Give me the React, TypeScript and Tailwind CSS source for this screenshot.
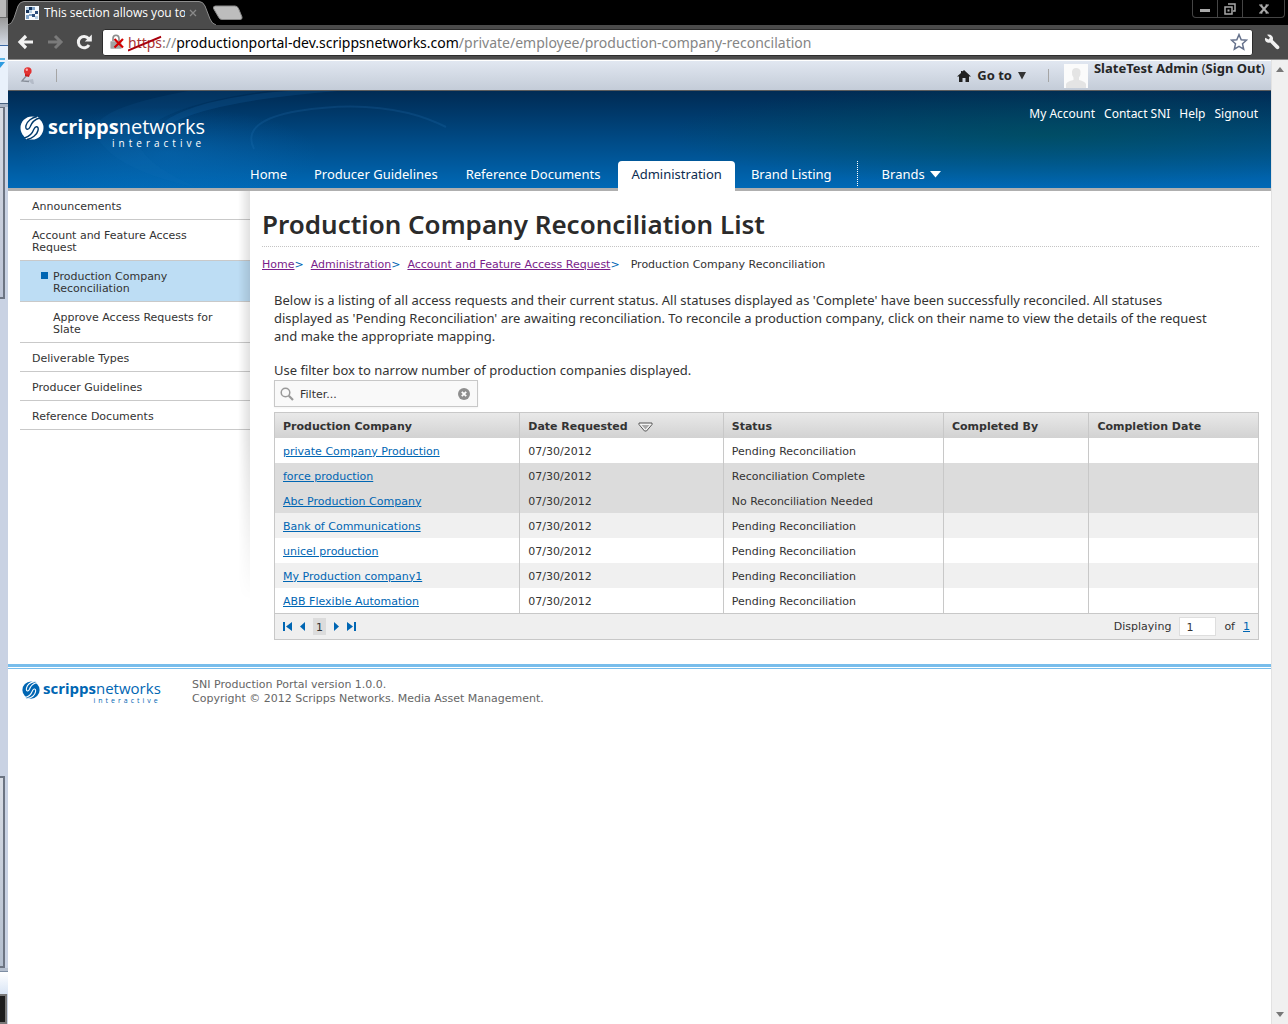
import React from "react";

const ui = "font-['Open_Sans','Noto_Sans',sans-serif]";
const lucida = "font-['Noto_Sans','Open_Sans',sans-serif]";
const verdana = "font-['DejaVu_Sans',sans-serif]";
const copy = "font-['Noto_Sans','DejaVu_Sans',sans-serif] text-[13px] leading-[18px]";

type Row = { name: string; date: string; status: string; bg: string };

const rows: Row[] = [
  { name: "private Company Production", date: "07/30/2012", status: "Pending Reconciliation", bg: "bg-white" },
  { name: "force production", date: "07/30/2012", status: "Reconciliation Complete", bg: "bg-[#dcdcdc]" },
  { name: "Abc Production Company", date: "07/30/2012", status: "No Reconciliation Needed", bg: "bg-[#dcdcdc]" },
  { name: "Bank of Communications", date: "07/30/2012", status: "Pending Reconciliation", bg: "bg-[#f0f0f0]" },
  { name: "unicel production", date: "07/30/2012", status: "Pending Reconciliation", bg: "bg-white" },
  { name: "My Production company1", date: "07/30/2012", status: "Pending Reconciliation", bg: "bg-[#f0f0f0]" },
  { name: "ABB Flexible Automation", date: "07/30/2012", status: "Pending Reconciliation", bg: "bg-white" },
];

function LogoMark({ className, fg, bg }: { className: string; fg: string; bg: string }) {
  return (
    <svg viewBox="0 0 24 24" className={className} aria-hidden="true">
      <circle cx="12" cy="12" r="11.5" fill={fg} />
      <path
        d="M17 0.500C12 1.500 7 5 6 9.500C5 14 8.500 14.500 10 11C11.500 7 14 3.500 19.500 2"
        fill={fg}
        stroke={bg}
        strokeWidth="1.400"
      />
      <path
        d="M7 23.500C12 22.500 17 19 18 14.500C19 10 15.500 9.500 14 13C12.500 17 10 20.500 4.500 22"
        fill={fg}
        stroke={bg}
        strokeWidth="1.400"
      />
    </svg>
  );
}

function DesktopStrip() {
  return (
    <div className="flex w-2 shrink-0 flex-col overflow-hidden bg-[#c9d2e3]" aria-hidden="true">
      <div className="h-[18px] border-r-2 border-b border-[#6a6a6a] bg-[#b9b9b9]" />
      <div className="h-[27px] bg-gradient-to-b from-[#9a9a9a] to-[#d5dce6]" />
      <div className="h-[58px] border-t border-[#3b69a5] bg-[#e9f1fb] pt-3">
        <div className="h-[2px] w-[5px] bg-[#59b4e6]" />
        <svg viewBox="0 0 5 7" className="mt-[2px] h-[7px] w-[5px]">
          <path d="M0 0H5L0 6Z" fill="#2d9be0" />
        </svg>
      </div>
      <div className="h-1 border-t border-[#47607f] bg-[#a9b4c6]" />
      <div className="mr-[3px] h-[192px] border-t border-r-2 border-b-2 border-[#6c7482] bg-gradient-to-b from-[#d9dde5] to-[#bcc4d6]" />
      <div className="h-[477px]" />
      <div className="mr-[3px] h-[192px] border-t-2 border-r-2 border-b-2 border-[#6c7482] bg-gradient-to-b from-[#d9dde5] to-[#b4bfcf]" />
      <div className="h-1 border-b border-[#7d8da3] bg-[#b5bfce]" />
      <div className="h-[22px] bg-gradient-to-b from-white to-[#d9e5f5]" />
      <div className="mr-px flex-1 border-t-2 border-r-2 border-b-2 border-[#777] bg-[#1d1d1d]" />
    </div>
  );
}

function TabBar() {
  return (
    <div className="flex h-[25px] bg-black">
      <div className="relative flex h-[25px] w-[208px] items-center pl-[17px]">
        <svg viewBox="0 0 208 25" preserveAspectRatio="none" className="absolute inset-0 h-full w-full" aria-hidden="true">
          <path d="M0 25Q4 24 6 18L10 6Q12 1.500 16 1.500H191Q195 1.500 197 6L202 19Q204 24 208 25Z" fill="#4b4b4b" />
          <path d="M0 25Q4 24 6 18L10 6Q12 1.500 16 1.500H191Q195 1.500 197 6L202 19Q204 24 208 25" fill="none" stroke="#8e8e8e" />
        </svg>
        <svg viewBox="0 0 14 14" className="relative h-[14px] w-[14px]" aria-hidden="true">
          <path d="M0 0H14V14H0Z" fill="#f4f8fc" />
          <path d="M4 1H7V4H4ZM1 4H4V7H1Z" fill="#15345c" />
          <path d="M7 8H10V11H7ZM10 5H13V8H10Z" fill="#2a4d7c" />
          <path d="M1 1H4V4H1ZM4 4H7V7H4ZM10 10H13V13H10Z" fill="#b4cde2" />
          <path d="M7 1H10V4H7ZM1 9H4V13H1ZM4 8H7V10H4Z" fill="#7fa3c8" />
        </svg>
        <span className={`relative ml-[5px] w-[141px] overflow-hidden text-[12px] leading-4 whitespace-nowrap text-white ${ui}`}>
          This section allows you to
        </span>
        <button type="button" aria-label="Close tab" className="relative ml-1">
          <svg viewBox="0 0 8 8" className="h-2 w-2">
            <path d="M1 1L7 7M7 1L1 7" stroke="#8a8a8a" strokeWidth="1.300" />
          </svg>
        </button>
      </div>
      <button type="button" aria-label="New tab" className="ml-[-4px] flex items-center">
        <svg viewBox="0 0 32 16" className="h-4 w-8">
          <path d="M3.500 1H23Q25.500 1 26.500 3.500L30 12Q30.500 14.500 28 14.500H10Q7.500 14.500 6.500 12L1.500 3.500Q1 1 3.500 1Z" fill="#bdbdbd" stroke="#8a8a8a" />
        </svg>
      </button>
      <div className="mr-[3px] ml-auto flex h-[18px] rounded-b border-x border-b border-[#454545]">
        <button type="button" aria-label="Minimize" className="flex w-[25px] items-center justify-center border-r border-[#454545]">
          <span className="mt-1 h-[3px] w-[10px] bg-[#a9a9a9]" />
        </button>
        <button type="button" aria-label="Restore" className="flex w-[25px] items-center justify-center border-r border-[#454545]">
          <svg viewBox="0 0 12 12" className="h-3 w-3">
            <path d="M4 1H11V8H9M1 4H8V11H1Z" fill="none" stroke="#a9a9a9" strokeWidth="1.500" />
            <path d="M3.500 6.500H5.500V8.500H3.500Z" fill="#a9a9a9" />
          </svg>
        </button>
        <button type="button" aria-label="Close" className="flex w-[41px] items-center justify-center">
          <svg viewBox="0 0 10 10" className="h-[10px] w-[10px]">
            <path d="M1.500 1L8.500 9M8.500 1L1.500 9" stroke="#a9a9a9" strokeWidth="2" />
            <path d="M0 1H3.500M6.500 1H10M0 9H3.500M6.500 9H10" stroke="#a9a9a9" />
          </svg>
        </button>
      </div>
    </div>
  );
}

function AddressBar() {
  return (
    <div className="flex h-[35px] items-center border-b border-[#8e8e8e] bg-[#4b4b4b] pl-[9px]">
      <button type="button" aria-label="Back">
        <svg viewBox="0 0 18 16" className="h-4 w-[18px]">
          <path d="M9 2L3 8L9 14M3 8H16" fill="none" stroke="#f2f2f2" strokeWidth="3.200" />
        </svg>
      </button>
      <button type="button" aria-label="Forward" className="ml-[11px]">
        <svg viewBox="0 0 18 16" className="h-4 w-[18px]">
          <path d="M9 2L15 8L9 14M15 8H2" fill="none" stroke="#7a7a7a" strokeWidth="3" />
        </svg>
      </button>
      <button type="button" aria-label="Reload" className="ml-3">
        <svg viewBox="0 0 16 16" className="h-4 w-4">
          <path d="M13 11A5.700 5.700 0 1 1 12.500 4.500" fill="none" stroke="#f2f2f2" strokeWidth="3" />
          <path d="M15.800 0.500V7.500H8.800Z" fill="#f2f2f2" />
        </svg>
      </button>
      <div className="ml-[10px] flex h-[27px] min-w-0 flex-1 items-center rounded-[3px] border border-[#2c2c2c] bg-white pl-[7px]">
        <svg viewBox="0 0 14 16" className="h-4 w-[14px] shrink-0" aria-hidden="true">
          <path d="M3 8V4.500Q3 1.200 6 1.200Q9 1.200 9 4.500V8" fill="none" stroke="#8d8d8d" strokeWidth="1.600" />
          <path d="M0.500 7H11.500V15H0.500Z" fill="#b9b9b9" />
          <path d="M0.500 9H11M0.500 11H11M0.500 13H11" stroke="#8d8d8d" />
          <path d="M4.500 5L13 13.500M13 5L4.500 13.500" stroke="#d40000" strokeWidth="2.200" />
        </svg>
        <div role="textbox" aria-label="Address" className={`ml-1 flex pt-px text-[14px] leading-5 whitespace-nowrap text-[#858585] ${lucida}`}>
          <span className="relative text-[#a33]">
            https
            <svg viewBox="0 0 34 16" preserveAspectRatio="none" className="absolute inset-0 h-full w-full" aria-hidden="true">
              <path d="M0 14L33 3" stroke="#a8000c" strokeWidth="1.600" />
            </svg>
          </span>
          <span>://</span>
          <span className="text-black">productionportal-dev.scrippsnetworks.com</span>
          <span>/private/employee/production-company-reconcilation</span>
        </div>
        <button type="button" aria-label="Bookmark this page" className="mr-[4px] ml-auto">
          <svg viewBox="0 0 18 18" className="h-[18px] w-[18px]">
            <path d="M9 1.600L11.200 6.700L16.500 7.200L12.500 10.800L13.700 16.200L9 13.400L4.300 16.200L5.500 10.800L1.500 7.200L6.800 6.700Z" fill="#fff" stroke="#66728c" strokeWidth="1.500" />
          </svg>
        </button>
      </div>
      <button type="button" aria-label="Settings" className="mr-2 ml-[11px]">
        <svg viewBox="0 0 16 16" className="h-4 w-4">
          <path d="M3 0.800L6 3.800L4.600 5.600L1.300 3.800Q0.300 6 2 7.800Q3.800 9.400 6.200 8.600L12 14.600Q13.500 16 15 14.600Q16 13 14.600 11.700L8.800 6Q9.600 3.600 7.800 1.800Q5.800 0.100 3 0.800Z" fill="#f0f0f0" />
        </svg>
      </button>
    </div>
  );
}

function Dock() {
  return (
    <div className={`flex h-[31px] items-center border-t border-b border-t-white border-b-[#5d5d5d] bg-gradient-to-b from-[#e1e7f1] to-[#c4ccd8] pl-3 text-[13px] font-bold text-[#262626] ${lucida}`}>
      <button type="button" aria-label="Pin the dock">
        <svg viewBox="0 0 16 20" className="h-5 w-4">
          <path d="M8 14L13 13L14 18L12 18Z" fill="#a9b1be" opacity="0.700" />
          <path d="M7 9L2 15L9 15.500" fill="none" stroke="#868d98" strokeWidth="1.300" />
          <path d="M5 7L10 8L9 11L5 10Z" fill="#c91c1c" />
          <circle cx="7.800" cy="5" r="3.800" fill="#e23232" />
          <circle cx="6.800" cy="3.800" r="1.200" fill="#ffaaaa" />
        </svg>
      </button>
      <span className="ml-5 h-[13px] w-px bg-[#a5a5a5]" />
      <button type="button" className="ml-auto flex items-center">
        <svg viewBox="0 0 14 12" className="h-3 w-[14px]" aria-hidden="true">
          <path d="M7 0L14 6.500H12V12H8.500V8H5.500V12H2V6.500H0L4 3V1H5.500V1.500Z" fill="#222" />
        </svg>
        <span className="ml-[6px]">Go to</span>
        <svg viewBox="0 0 8 8" className="ml-[6px] h-2 w-2" aria-hidden="true">
          <path d="M0 0H8L4 7.500Z" fill="#333" />
        </svg>
      </button>
      <span className="ml-[22px] h-[13px] w-px bg-[#a5a5a5]" />
      <svg viewBox="0 0 24 24" className="ml-[15px] h-6 w-6" role="img" aria-label="User portrait">
        <path d="M0 0H24V24H0Z" fill="#fbfbfb" />
        <path d="M2 24V20Q3 17.500 9.500 16V13.500Q7.500 11 8 7.500Q8.500 4 12 4Q16 4 16.500 7.500Q17 11 15 13.500V16Q21 17.500 22 20V24Z" fill="#e4e4e4" />
      </svg>
      <div className="mr-[6px] ml-[6px] self-start leading-[14px]">
        <a href="#profile">SlateTest Admin</a> <span className="font-normal">(</span>
        <a href="#signout">Sign Out</a>
        <span className="font-normal">)</span>
      </div>
    </div>
  );
}

function Header() {
  return (
    <header className="relative flex h-[100px] flex-col justify-between border-b-[3px] border-[#afafaf] bg-gradient-to-b from-[#002b54] via-[#004a85] to-[#0069b6]">
      <svg viewBox="0 0 1263 97" preserveAspectRatio="none" className="absolute inset-0 h-[97px] w-full" aria-hidden="true">
        <defs>
          <radialGradient id="green">
            <stop offset="0" stopColor="#005540" stopOpacity="0.420" />
            <stop offset="1" stopColor="#005540" stopOpacity="0" />
          </radialGradient>
          <radialGradient id="glow">
            <stop offset="0" stopColor="#0f7acb" stopOpacity="0.300" />
            <stop offset="1" stopColor="#0f7acb" stopOpacity="0" />
          </radialGradient>
        </defs>
        <ellipse cx="1040" cy="44" rx="380" ry="52" fill="url(#green)" />
        <ellipse cx="160" cy="62" rx="150" ry="46" fill="url(#glow)" />
        <path d="M330 0Q180 12 150 42Q150 26 200 12Q240 2 280 0Z" fill="#1a73bd" opacity="0.180" />
        <path d="M180 0Q70 20 90 48Q110 80 190 97Q130 70 130 48Q150 14 260 0Z" fill="#1a73bd" opacity="0.100" />
        <path d="M246 58Q232 30 290 20Q350 10 400 22Q420 27 438 36" fill="none" stroke="#2b80c4" strokeWidth="2" opacity="0.180" />
      </svg>
      <div className="relative flex justify-between pr-[13px] pl-3">
        <a href="#home" aria-label="Scripps Networks Interactive" className={`mt-6 flex text-white ${ui}`}>
          <LogoMark className="mt-px h-6 w-6" fg="#ffffff" bg="#003a6c" />
          <span className="ml-1 flex flex-col">
            <span className="text-[20px] leading-[24px]">
              <b>scripps</b>networks
            </span>
            <span className="self-end text-[10px] leading-[8px] tracking-[4px]">interactive</span>
          </span>
        </a>
        <nav aria-label="Account" className={`mt-[15px] flex gap-[9px] text-[12px] leading-4 text-white ${lucida}`}>
          <a href="#account">My Account</a>
          <a href="#contact">Contact SNI</a>
          <a href="#help">Help</a>
          <a href="#signout">Signout</a>
        </nav>
      </div>
      <nav aria-label="Main" className={`relative mb-[-3px] ml-[230px] flex text-[13px] leading-[27px] text-white ${lucida}`}>
        <a href="#home" className="px-3">Home</a>
        <a href="#guidelines" className="ml-[3px] px-3">Producer Guidelines</a>
        <a href="#documents" className="ml-1 px-3">Reference Documents</a>
        <a href="#administration" aria-current="page" className="ml-[6px] rounded-t bg-white px-[13px] pb-[3px] text-[#0b2c50]">
          Administration
        </a>
        <a href="#brandlisting" className="ml-1 px-3">Brand Listing</a>
        <span className="ml-[13px] h-[25px] border-l border-dotted border-white" />
        <button type="button" className="ml-6 flex h-[27px] items-center">
          Brands
          <svg viewBox="0 0 11 7" className="ml-[5px] h-[7px] w-[11px]" aria-hidden="true">
            <path d="M0 0H11L5.500 6.500Z" fill="#fff" />
          </svg>
        </button>
      </nav>
    </header>
  );
}

function SideItem({ children, kind = "top" }: { children: React.ReactNode; kind?: "top" | "sub" | "current" }) {
  const border = "border-b border-[#c9c9c9] pt-[10px] pb-[6px]";
  if (kind === "top")
    return (
      <li className={border}>
        <a href="#section" className="block pr-10 pl-3">{children}</a>
      </li>
    );
  return (
    <li className={kind === "current" ? `${border} bg-[#bdddf4]` : border}>
      <a href="#section" className="flex gap-[5px] pr-5 pl-[21px]">
        <span className={kind === "current" ? "mt-px h-[7px] w-[7px] shrink-0 bg-[#0066b3]" : "w-[7px] shrink-0"} />
        <span>{children}</span>
      </a>
    </li>
  );
}

function Sidebar() {
  return (
    <aside className={`relative w-[242px] shrink-0 pl-3 text-[11px] leading-[12px] text-[#333] ${verdana}`}>
      <ul>
        <SideItem>Announcements</SideItem>
        <SideItem>Account and Feature Access Request</SideItem>
        <SideItem kind="current">Production Company<br />Reconciliation</SideItem>
        <SideItem kind="sub">Approve Access Requests for Slate</SideItem>
        <SideItem>Deliverable Types</SideItem>
        <SideItem>Producer Guidelines</SideItem>
        <SideItem>Reference Documents</SideItem>
      </ul>
      <div className="pointer-events-none absolute top-0 right-0 h-[410px] w-3 bg-gradient-to-r from-transparent to-black/12 [mask-image:linear-gradient(black_60%,transparent)]" />
    </aside>
  );
}

function Crumb({ children }: { children: string }) {
  return (
    <li>
      <a href="#crumb" className="text-[#7a1d8a] underline">{children}</a>
      <span className="text-[#0066b3]">&gt;</span>
    </li>
  );
}

function PagerButton({ label, d }: { label: string; d: string }) {
  return (
    <button type="button" aria-label={label}>
      <svg viewBox="0 0 9 9" className="h-[9px] w-[9px]">
        <path d={d} fill="#0066b3" />
      </svg>
    </button>
  );
}

function RequestTable() {
  const th = "border-r border-[#c8c8c8] px-2 pt-[3px] text-left font-bold last:border-r-0";
  const td = "border-r border-[#c8c8c8] px-2 pt-[3px] last:border-r-0";
  return (
    <div className="mt-[5px] border border-[#c8c8c8] text-[11px] text-[#333]">
      <table className="w-full table-fixed border-collapse">
        <colgroup>
          <col className="w-[24.900%]" />
          <col className="w-[20.700%]" />
          <col className="w-[22.400%]" />
          <col className="w-[14.800%]" />
          <col />
        </colgroup>
        <thead>
          <tr className="h-[25px] bg-gradient-to-b from-[#e9e9e9] to-[#d2d2d2]">
            <th scope="col" className={th}>Production Company</th>
            <th scope="col" className={th}>
              <button type="button" className="flex items-center font-bold">
                Date Requested
                <svg viewBox="0 0 15 10" className="ml-[10px] h-[10px] w-[15px]" aria-hidden="true">
                  <path d="M1 1H14V2.500L8.500 9H6.500L1 2.500Z" fill="#f5f5f5" stroke="#555" />
                  <path d="M3.500 3H11.500L7.500 7.500Z" fill="#aaa" />
                </svg>
              </button>
            </th>
            <th scope="col" className={th}>Status</th>
            <th scope="col" className={th}>Completed By</th>
            <th scope="col" className={th}>Completion Date</th>
          </tr>
        </thead>
        <tbody>
          {rows.map((r) => (
            <tr key={r.name} className={`h-[25px] ${r.bg}`}>
              <td className={td}>
                <a href="#company" className="text-[#0066b3] underline">{r.name}</a>
              </td>
              <td className={td}>{r.date}</td>
              <td className={td}>{r.status}</td>
              <td className={td} />
              <td className={td} />
            </tr>
          ))}
        </tbody>
      </table>
      <div className="flex h-[26px] items-center border-t border-[#c8c8c8] bg-[#efefef] px-2">
        <nav aria-label="Pages" className="flex items-center gap-[6px]">
          <PagerButton label="First page" d="M0 0H2V9H0ZM9 0V9L3 4.500Z" />
          <PagerButton label="Previous page" d="M7 0V9L2 4.500Z" />
          <span className="h-[17px] w-[13px] bg-[#dcdcdc] text-center leading-[19px]">1</span>
          <PagerButton label="Next page" d="M2 0V9L7 4.500Z" />
          <PagerButton label="Last page" d="M7 0H9V9H7ZM0 0V9L6 4.500Z" />
        </nav>
        <label htmlFor="page" className="ml-auto pt-[2px]">Displaying</label>
        <input id="page" type="text" defaultValue="1" className="ml-2 h-[19px] w-[37px] border border-[#dedede] bg-white px-[6px] pt-px outline-none" />
        <span className="ml-2 pt-[2px]">of</span>
        <a href="#last" className="ml-2 pt-[2px] text-[#0066b3] underline">1</a>
      </div>
    </div>
  );
}

function Main() {
  return (
    <main className={`min-w-0 flex-1 pr-3 pl-3 text-[#333] ${verdana}`}>
      <h1 className={`border-b border-dotted border-[#c4c4c4] pt-[17px] pb-[6px] text-[26px] leading-8 font-semibold text-[#2b2b2b] ${lucida}`}>
        Production Company Reconciliation List
      </h1>
      <nav aria-label="Breadcrumb" className="mt-[10px] text-[11px] leading-4">
        <ol className="flex gap-[7px]">
          <Crumb>Home</Crumb>
          <Crumb>Administration</Crumb>
          <Crumb>Account and Feature Access Request</Crumb>
          <li aria-current="page" className="pl-1">Production Company Reconciliation</li>
        </ol>
      </nav>
      <div className="mt-[18px] pl-3">
        <p className={copy}>
          Below is a listing of all access requests and their current status. All statuses displayed as 'Complete' have been successfully reconciled. All statuses
          <br />
          displayed as 'Pending Reconciliation' are awaiting reconciliation. To reconcile a production company, click on their name to view the details of the request
          <br />
          and make the appropriate mapping.
        </p>
        <label htmlFor="filter" className={`mt-4 block ${copy}`}>
          Use filter box to narrow number of production companies displayed.
        </label>
        <div className="mt-px flex h-[27px] w-[204px] items-center border border-[#c8c8c8] bg-[#f9f9f9] pr-[7px] pl-[5px] shadow-xs">
          <svg viewBox="0 0 14 14" className="h-[14px] w-[14px] shrink-0" aria-hidden="true">
            <circle cx="5.500" cy="5.500" r="4.300" fill="none" stroke="#999" strokeWidth="1.500" />
            <path d="M8.800 8.800L13 13" stroke="#999" strokeWidth="2.200" />
          </svg>
          <input id="filter" type="text" defaultValue="Filter..." className="ml-[6px] min-w-0 flex-1 bg-transparent pt-[3px] text-[11px] outline-none" />
          <button type="button" aria-label="Clear filter">
            <svg viewBox="0 0 12 12" className="h-3 w-3">
              <circle cx="6" cy="6" r="6" fill="#8f8f8f" />
              <path d="M3.800 3.800L8.200 8.200M8.200 3.800L3.800 8.200" stroke="#fff" strokeWidth="1.800" />
            </svg>
          </button>
        </div>
        <RequestTable />
      </div>
    </main>
  );
}

function Footer() {
  return (
    <footer className="mt-6">
      <div className="h-[5px] border-t-[3px] border-b border-[#78bdeb]" />
      <div className="flex pt-2 pl-[14px]">
        <a href="#home" aria-label="Scripps Networks Interactive" className={`flex w-[170px] pt-[2px] text-[#0066b3] ${ui}`}>
          <LogoMark className="mt-[2px] h-[18px] w-[18px]" fg="#0066b3" bg="#ffffff" />
          <span className="ml-[3px] flex flex-col">
            <span className="text-[15px] leading-[19px]">
              <b>scripps</b>networks
            </span>
            <span className="self-end text-[7px] leading-[5px] tracking-[3px]">interactive</span>
          </span>
        </a>
        <p className={`pt-px text-[11px] leading-[14px] text-[#666] ${verdana}`}>
          SNI Production Portal version 1.0.0.
          <br />
          Copyright © 2012 Scripps Networks. Media Asset Management.
        </p>
      </div>
    </footer>
  );
}

function ScrollTrack() {
  return (
    <div className="flex w-[17px] shrink-0 flex-col items-center justify-between border-l border-[#e2e2e2] bg-[#f0f0f0] py-[7px]" aria-hidden="true">
      <svg viewBox="0 0 8 5" className="h-[5px] w-2">
        <path d="M0 5L4 0L8 5Z" fill="#777" />
      </svg>
      <svg viewBox="0 0 8 5" className="h-[5px] w-2">
        <path d="M0 0L4 5L8 0Z" fill="#777" />
      </svg>
    </div>
  );
}

export default function App() {
  return (
    <div className="flex min-h-screen bg-white">
      <DesktopStrip />
      <div className="flex min-w-0 flex-1 flex-col">
        <TabBar />
        <AddressBar />
        <div className="flex flex-1">
          <div className="min-w-0 flex-1 bg-white">
            <Dock />
            <Header />
            <div className="flex">
              <Sidebar />
              <Main />
            </div>
            <Footer />
          </div>
          <ScrollTrack />
        </div>
      </div>
    </div>
  );
}
